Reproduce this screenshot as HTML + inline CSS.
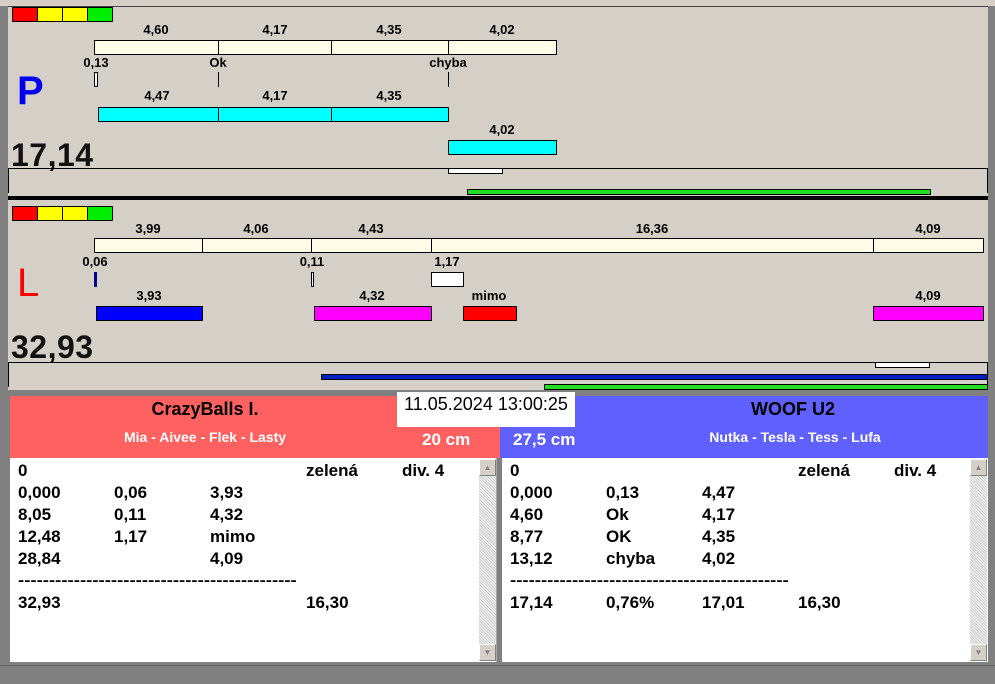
<!DOCTYPE html>
<html><head><meta charset="utf-8"><style>
*{margin:0;padding:0;box-sizing:border-box}
body{width:995px;height:684px;background:#808080;position:relative;overflow:hidden;font-family:"Liberation Sans",Arial,sans-serif;font-weight:bold}
div{position:absolute}
.pan{background:#d4d0c8}
.b{border:1px solid #000}
.cr{background:#fffbe6}
.lb{font-size:13px;color:#000;transform:translateX(-50%);white-space:nowrap;line-height:14px}
.big{font-size:32px;line-height:32px;color:#111;letter-spacing:0.5px}
.t{font-size:17px;line-height:22px;white-space:nowrap}
.d{font-size:15px;transform:scaleX(1.24);transform-origin:left}
.sb{background:#e8e8e8;background-image:repeating-linear-gradient(45deg,#d0d0d0 0 1px,#f0f0f0 1px 2px)}
.btn{background:#d4d0c8;border:1px solid;border-color:#fff #808080 #808080 #fff;width:17px;height:17px;font-size:8px;color:#808080;text-align:center;line-height:15px}
</style></head><body>
<div style="left:0;top:0;width:995px;height:6px;background:#d4d0c8"></div>
<div class="pan" style="left:8px;top:6px;width:980px;height:190px;border-top:1px solid #404040"></div>
<div style="left:8px;top:196px;width:980px;height:4px;background:#000"></div>
<div class="pan" style="left:8px;top:200px;width:980px;height:190px"></div>

<!-- P panel -->
<div class="b" style="left:12px;top:7px;width:26px;height:15px;background:#f00"></div>
<div class="b" style="left:37px;top:7px;width:26px;height:15px;background:#ff0"></div>
<div class="b" style="left:62px;top:7px;width:26px;height:15px;background:#ff0"></div>
<div class="b" style="left:87px;top:7px;width:26px;height:15px;background:#0e0"></div>
<div class="lb" style="left:156px;top:23px">4,60</div>
<div class="lb" style="left:275px;top:23px">4,17</div>
<div class="lb" style="left:389px;top:23px">4,35</div>
<div class="lb" style="left:502px;top:23px">4,02</div>
<div class="b cr" style="left:94px;top:40px;width:125px;height:15px"></div>
<div class="b cr" style="left:218px;top:40px;width:114px;height:15px"></div>
<div class="b cr" style="left:331px;top:40px;width:118px;height:15px"></div>
<div class="b cr" style="left:448px;top:40px;width:109px;height:15px"></div>
<div class="lb" style="left:96px;top:56px">0,13</div>
<div class="lb" style="left:218px;top:56px">Ok</div>
<div class="lb" style="left:448px;top:56px">chyba</div>
<div class="b" style="left:94px;top:72px;width:4px;height:15px;background:#fff"></div>
<div style="left:218px;top:72px;width:1px;height:15px;background:#000"></div>
<div style="left:448px;top:72px;width:1px;height:15px;background:#000"></div>
<div style="left:17px;top:70px;font-size:40px;line-height:42px;color:#0000ee">P</div>
<div class="lb" style="left:157px;top:89px">4,47</div>
<div class="lb" style="left:275px;top:89px">4,17</div>
<div class="lb" style="left:389px;top:89px">4,35</div>
<div class="b" style="left:98px;top:107px;width:121px;height:15px;background:#0ff"></div>
<div class="b" style="left:218px;top:107px;width:114px;height:15px;background:#0ff"></div>
<div class="b" style="left:331px;top:107px;width:118px;height:15px;background:#0ff"></div>
<div class="lb" style="left:502px;top:123px">4,02</div>
<div class="b" style="left:448px;top:140px;width:109px;height:15px;background:#0ff"></div>
<div class="big" style="left:11px;top:139px">17,14</div>
<div style="left:8px;top:168px;width:980px;height:1px;background:#000"></div>
<div style="left:8px;top:168px;width:1px;height:25px;background:#000"></div>
<div style="left:987px;top:168px;width:1px;height:25px;background:#000"></div>
<div class="b" style="left:448px;top:168px;width:55px;height:6px;background:#fff"></div>
<div class="b" style="left:467px;top:189px;width:464px;height:6px;background:#2d2"></div>

<!-- L panel -->
<div class="b" style="left:12px;top:206px;width:26px;height:15px;background:#f00"></div>
<div class="b" style="left:37px;top:206px;width:26px;height:15px;background:#ff0"></div>
<div class="b" style="left:62px;top:206px;width:26px;height:15px;background:#ff0"></div>
<div class="b" style="left:87px;top:206px;width:26px;height:15px;background:#0e0"></div>
<div class="lb" style="left:148px;top:222px">3,99</div>
<div class="lb" style="left:256px;top:222px">4,06</div>
<div class="lb" style="left:371px;top:222px">4,43</div>
<div class="lb" style="left:652px;top:222px">16,36</div>
<div class="lb" style="left:928px;top:222px">4,09</div>
<div class="b cr" style="left:94px;top:238px;width:109px;height:15px"></div>
<div class="b cr" style="left:202px;top:238px;width:110px;height:15px"></div>
<div class="b cr" style="left:311px;top:238px;width:121px;height:15px"></div>
<div class="b cr" style="left:431px;top:238px;width:443px;height:15px"></div>
<div class="b cr" style="left:873px;top:238px;width:111px;height:15px"></div>
<div class="lb" style="left:95px;top:255px">0,06</div>
<div class="lb" style="left:312px;top:255px">0,11</div>
<div class="lb" style="left:447px;top:255px">1,17</div>
<div style="left:94px;top:272px;width:3px;height:15px;background:#00008b"></div>
<div class="b" style="left:311px;top:272px;width:3px;height:15px;background:#fff"></div>
<div class="b" style="left:431px;top:272px;width:33px;height:15px;background:#fff"></div>
<div style="left:17px;top:262px;font-size:40px;line-height:42px;color:#f00;font-weight:normal">L</div>
<div class="lb" style="left:149px;top:289px">3,93</div>
<div class="lb" style="left:372px;top:289px">4,32</div>
<div class="lb" style="left:489px;top:289px">mimo</div>
<div class="lb" style="left:928px;top:289px">4,09</div>
<div class="b" style="left:96px;top:306px;width:107px;height:15px;background:#00f"></div>
<div class="b" style="left:314px;top:306px;width:118px;height:15px;background:#f0f"></div>
<div class="b" style="left:463px;top:306px;width:54px;height:15px;background:#f00"></div>
<div class="b" style="left:873px;top:306px;width:111px;height:15px;background:#f0f"></div>
<div class="big" style="left:11px;top:331px">32,93</div>
<div style="left:8px;top:362px;width:980px;height:1px;background:#000"></div>
<div style="left:8px;top:362px;width:1px;height:25px;background:#000"></div>
<div style="left:987px;top:362px;width:1px;height:25px;background:#000"></div>
<div class="b" style="left:875px;top:362px;width:55px;height:6px;background:#fff"></div>
<div class="b" style="left:321px;top:374px;width:667px;height:6px;background:#0020c0"></div>
<div class="b" style="left:544px;top:384px;width:444px;height:6px;background:#2d2"></div>

<!-- headers -->
<div style="left:10px;top:396px;width:490px;height:62px;background:#ff6060"></div>
<div style="left:500px;top:396px;width:488px;height:62px;background:#6060ff"></div>
<div style="left:397px;top:392px;width:178px;height:35px;background:#fff"></div>
<div style="left:397px;top:393px;width:178px;text-align:center;font-size:18px;font-weight:normal;line-height:22px">11.05.2024 13:00:25</div>
<div class="t" style="left:205px;top:398px;transform:translateX(-50%);font-size:18px">CrazyBalls I.</div>
<div class="t" style="left:205px;top:426px;transform:translateX(-50%);font-size:14px;color:#fff">Mia - Aivee - Flek - Lasty</div>
<div class="t" style="left:422px;top:429px;color:#fff">20 cm</div>
<div class="t" style="left:513px;top:429px;color:#fff">27,5 cm</div>
<div class="t" style="left:793px;top:398px;transform:translateX(-50%);font-size:18px">WOOF U2</div>
<div class="t" style="left:795px;top:426px;transform:translateX(-50%);font-size:14px;color:#fff">Nutka - Tesla - Tess - Lufa</div>

<!-- lists -->
<div style="left:10px;top:458px;width:487px;height:204px;background:#fff;border-right:1px solid #aaa"></div>
<div class="sb" style="left:479px;top:459px;width:17px;height:202px"></div>
<div class="btn" style="left:479px;top:459px">▲</div>
<div class="btn" style="left:479px;top:644px">▼</div>
<div style="left:502px;top:458px;width:486px;height:204px;background:#fff"></div>
<div class="sb" style="left:970px;top:459px;width:17px;height:202px"></div>
<div class="btn" style="left:970px;top:459px">▲</div>
<div class="btn" style="left:970px;top:644px">▼</div>

<div class="t" style="left:18px;top:460px">0</div><div class="t" style="left:306px;top:460px">zelená</div><div class="t" style="left:402px;top:460px">div. 4</div>
<div class="t" style="left:18px;top:482px">0,000</div><div class="t" style="left:114px;top:482px">0,06</div><div class="t" style="left:210px;top:482px">3,93</div>
<div class="t" style="left:18px;top:504px">8,05</div><div class="t" style="left:114px;top:504px">0,11</div><div class="t" style="left:210px;top:504px">4,32</div>
<div class="t" style="left:18px;top:526px">12,48</div><div class="t" style="left:114px;top:526px">1,17</div><div class="t" style="left:210px;top:526px">mimo</div>
<div class="t" style="left:18px;top:548px">28,84</div><div class="t" style="left:210px;top:548px">4,09</div>
<div class="t d" style="left:18px;top:570px">---------------------------------------------</div>
<div class="t" style="left:18px;top:592px">32,93</div><div class="t" style="left:306px;top:592px">16,30</div>

<div class="t" style="left:510px;top:460px">0</div><div class="t" style="left:798px;top:460px">zelená</div><div class="t" style="left:894px;top:460px">div. 4</div>
<div class="t" style="left:510px;top:482px">0,000</div><div class="t" style="left:606px;top:482px">0,13</div><div class="t" style="left:702px;top:482px">4,47</div>
<div class="t" style="left:510px;top:504px">4,60</div><div class="t" style="left:606px;top:504px">Ok</div><div class="t" style="left:702px;top:504px">4,17</div>
<div class="t" style="left:510px;top:526px">8,77</div><div class="t" style="left:606px;top:526px">OK</div><div class="t" style="left:702px;top:526px">4,35</div>
<div class="t" style="left:510px;top:548px">13,12</div><div class="t" style="left:606px;top:548px">chyba</div><div class="t" style="left:702px;top:548px">4,02</div>
<div class="t d" style="left:510px;top:570px">---------------------------------------------</div>
<div class="t" style="left:510px;top:592px">17,14</div><div class="t" style="left:606px;top:592px">0,76%</div><div class="t" style="left:702px;top:592px">17,01</div><div class="t" style="left:798px;top:592px">16,30</div>
<div style="left:0;top:665px;width:995px;height:1px;background:#606060"></div>
</body></html>
